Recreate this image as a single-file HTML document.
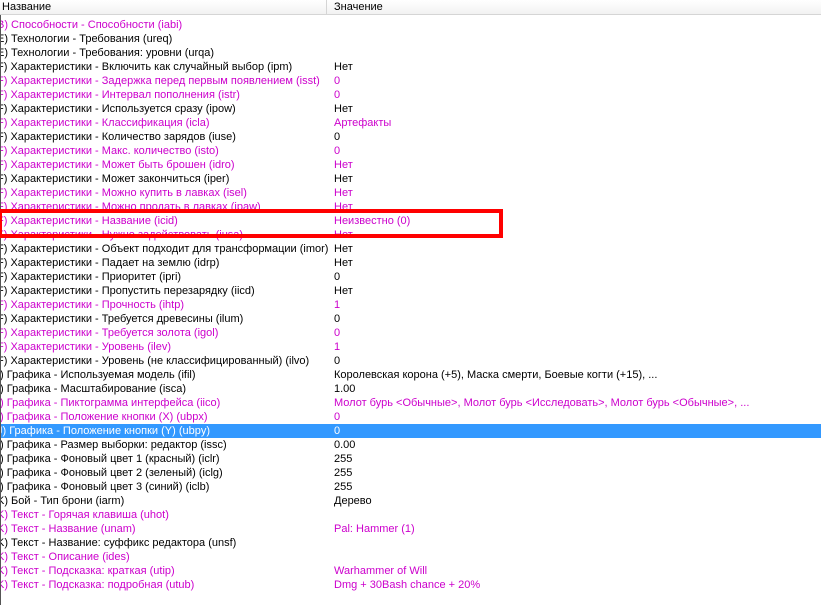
<!DOCTYPE html>
<html><head><meta charset="utf-8"><style>
body{margin:0;width:821px;height:605px;overflow:hidden;background:#fff;font-family:"Liberation Sans",sans-serif;font-size:11px;position:relative}
.h{position:absolute;top:0;left:0;width:821px;height:14px;background:linear-gradient(#fff,#f2f2f2);border-bottom:1px solid #d5d5d5}
.h span{position:absolute;top:1px}
.dv{position:absolute;left:326px;top:0;width:1px;height:14px;background:#d5d5d5}
.r{position:absolute;left:0;width:821px;height:14px;line-height:14px;white-space:nowrap}
.r .a{position:absolute;left:-3px}
.r .b{position:absolute;left:334px}
.m{color:#cc00cc}
.s{background:#3399ff;color:#fff}
.lb{position:absolute;left:0;top:15px;width:1px;height:590px;background:#555}
.box{position:absolute;left:-2px;top:209px;width:497px;height:21px;border:4px solid #f00}
</style></head><body>
<div class="h"><span style="left:2px">Название</span><span style="left:334px">Значение</span></div>
<div class="dv"></div>
<div id="rows" style="position:absolute;left:0;top:2px;width:821px">
<div class="r m" style="top:16px"><span class="a">В) Способности - Способности (iabi)</span></div>
<div class="r" style="top:30px"><span class="a">Е) Технологии - Требования (ureq)</span></div>
<div class="r" style="top:44px"><span class="a">Е) Технологии - Требования: уровни (urqa)</span></div>
<div class="r" style="top:58px"><span class="a">F) Характеристики - Включить как случайный выбор (ipm)</span><span class="b">Нет</span></div>
<div class="r m" style="top:72px"><span class="a">F) Характеристики - Задержка перед первым появлением (isst)</span><span class="b">0</span></div>
<div class="r m" style="top:86px"><span class="a">F) Характеристики - Интервал пополнения (istr)</span><span class="b">0</span></div>
<div class="r" style="top:100px"><span class="a">F) Характеристики - Используется сразу (ipow)</span><span class="b">Нет</span></div>
<div class="r m" style="top:114px"><span class="a">F) Характеристики - Классификация (icla)</span><span class="b">Артефакты</span></div>
<div class="r" style="top:128px"><span class="a">F) Характеристики - Количество зарядов (iuse)</span><span class="b">0</span></div>
<div class="r m" style="top:142px"><span class="a">F) Характеристики - Макс. количество (isto)</span><span class="b">0</span></div>
<div class="r m" style="top:156px"><span class="a">F) Характеристики - Может быть брошен (idro)</span><span class="b">Нет</span></div>
<div class="r" style="top:170px"><span class="a">F) Характеристики - Может закончиться (iper)</span><span class="b">Нет</span></div>
<div class="r m" style="top:184px"><span class="a">F) Характеристики - Можно купить в лавках (isel)</span><span class="b">Нет</span></div>
<div class="r m" style="top:198px"><span class="a">F) Характеристики - Можно продать в лавках (ipaw)</span><span class="b">Нет</span></div>
<div class="r m" style="top:212px"><span class="a">F) Характеристики - Название (icid)</span><span class="b">Неизвестно (0)</span></div>
<div class="r m" style="top:226px"><span class="a">F) Характеристики - Нужно задействовать (iusa)</span><span class="b">Нет</span></div>
<div class="r" style="top:240px"><span class="a">F) Характеристики - Объект подходит для трансформации (imor)</span><span class="b">Нет</span></div>
<div class="r" style="top:254px"><span class="a">F) Характеристики - Падает на землю (idrp)</span><span class="b">Нет</span></div>
<div class="r" style="top:268px"><span class="a">F) Характеристики - Приоритет (ipri)</span><span class="b">0</span></div>
<div class="r" style="top:282px"><span class="a">F) Характеристики - Пропустить перезарядку (iicd)</span><span class="b">Нет</span></div>
<div class="r m" style="top:296px"><span class="a">F) Характеристики - Прочность (ihtp)</span><span class="b">1</span></div>
<div class="r" style="top:310px"><span class="a">F) Характеристики - Требуется древесины (ilum)</span><span class="b">0</span></div>
<div class="r m" style="top:324px"><span class="a">F) Характеристики - Требуется золота (igol)</span><span class="b">0</span></div>
<div class="r m" style="top:338px"><span class="a">F) Характеристики - Уровень (ilev)</span><span class="b">1</span></div>
<div class="r" style="top:352px"><span class="a">F) Характеристики - Уровень (не классифицированный) (ilvo)</span><span class="b">0</span></div>
<div class="r" style="top:366px"><span class="a">I) Графика - Используемая модель (ifil)</span><span class="b">Королевская корона (+5), Маска смерти, Боевые когти (+15), ...</span></div>
<div class="r" style="top:380px"><span class="a">I) Графика - Масштабирование (isca)</span><span class="b">1.00</span></div>
<div class="r m" style="top:394px"><span class="a">I) Графика - Пиктограмма интерфейса (iico)</span><span class="b">Молот бурь &lt;Обычные&gt;, Молот бурь &lt;Исследовать&gt;, Молот бурь &lt;Обычные&gt;, ...</span></div>
<div class="r m" style="top:408px"><span class="a">I) Графика - Положение кнопки (X) (ubpx)</span><span class="b">0</span></div>
<div class="r s" style="top:422px"><span class="a">J) Графика - Положение кнопки (Y) (ubpy)</span><span class="b">0</span></div>
<div class="r" style="top:436px"><span class="a">I) Графика - Размер выборки: редактор (issc)</span><span class="b">0.00</span></div>
<div class="r" style="top:450px"><span class="a">I) Графика - Фоновый цвет 1 (красный) (iclr)</span><span class="b">255</span></div>
<div class="r" style="top:464px"><span class="a">I) Графика - Фоновый цвет 2 (зеленый) (iclg)</span><span class="b">255</span></div>
<div class="r" style="top:478px"><span class="a">I) Графика - Фоновый цвет 3 (синий) (iclb)</span><span class="b">255</span></div>
<div class="r" style="top:492px"><span class="a">K) Бой - Тип брони (iarm)</span><span class="b">Дерево</span></div>
<div class="r m" style="top:506px"><span class="a">K) Текст - Горячая клавиша (uhot)</span></div>
<div class="r m" style="top:520px"><span class="a">K) Текст - Название (unam)</span><span class="b">Pal: Hammer (1)</span></div>
<div class="r" style="top:534px"><span class="a">K) Текст - Название: суффикс редактора (unsf)</span></div>
<div class="r m" style="top:548px"><span class="a">K) Текст - Описание (ides)</span></div>
<div class="r m" style="top:562px"><span class="a">K) Текст - Подсказка: краткая (utip)</span><span class="b">Warhammer of Will</span></div>
<div class="r m" style="top:576px"><span class="a">K) Текст - Подсказка: подробная (utub)</span><span class="b">Dmg + 30Bash chance + 20%</span></div>
</div>
<div class="lb"></div>
<div class="box"></div>
</body></html>
